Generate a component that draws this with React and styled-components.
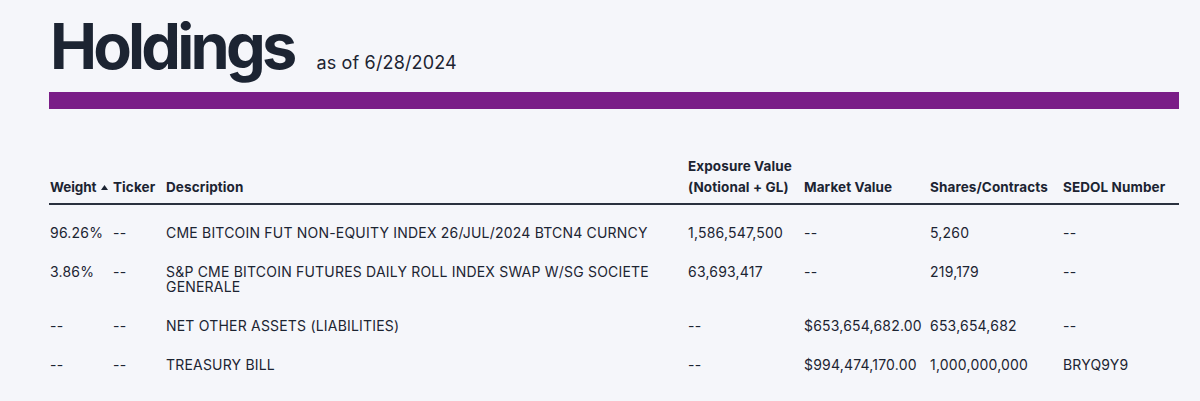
import React from "react";
import styled, { createGlobalStyle } from "styled-components";

const Global = createGlobalStyle`
  html, body { margin: 0; padding: 0; background: #f5f6fa; }
  body { font-family: Inter, "Liberation Sans", sans-serif; color: #1c2432; }
`;

const Page = styled.div`
  padding: 14px 21px 0 49px;
`;

const TitleRow = styled.div`
  display: flex;
  align-items: baseline;
  gap: 23px;
  padding-left: 1px;
`;

const Title = styled.h1`
  margin: 0;
  font-size: 63px;
  line-height: 64px;
  font-weight: 700;
  letter-spacing: -3.8px;
  color: #1c2432;
`;

const AsOf = styled.span`
  font-size: 18px;
  font-weight: 400;
  letter-spacing: 0.15px;
  color: #1c2432;
`;

const Bar = styled.div`
  margin-top: 14px;
  height: 17px;
  background: #7a1d87;
`;

const Table = styled.table`
  margin-top: 47px;
  width: 100%;
  border-collapse: collapse;
  table-layout: fixed;
`;

const Th = styled.th`
  text-align: left;
  vertical-align: bottom;
  font-size: 13.5px;
  line-height: 21px;
  letter-spacing: 0.1px;
  font-weight: 700;
  padding: 0 4px 5px 1px;
  border-bottom: 2px solid #2a313e;
  white-space: ${(p) => (p.$wrap ? "normal" : "nowrap")};
`;

const SortLabel = styled.span`
  letter-spacing: -0.1px;
`;

const Td = styled.td`
  vertical-align: top;
  font-size: 14px;
  line-height: 15px;
  letter-spacing: 0.2px;
  padding: ${(p) => (p.$first ? "20px" : "12px")} ${(p) => (p.$wide ? "36px" : "6px")} 12px 1px;
  font-weight: 400;
`;

const Arrow = styled.svg`
  display: inline-block;
  margin-left: 5px;
  vertical-align: 2px;
`;

const cols = [63, 53, 522, 116, 126, 133, 117];

const rows = [
  ["96.26%", "--", "CME BITCOIN FUT NON-EQUITY INDEX 26/JUL/2024 BTCN4 CURNCY", "1,586,547,500", "--", "5,260", "--"],
  ["3.86%", "--", "S&P CME BITCOIN FUTURES DAILY ROLL INDEX SWAP W/SG SOCIETE GENERALE", "63,693,417", "--", "219,179", "--"],
  ["--", "--", "NET OTHER ASSETS (LIABILITIES)", "--", "$653,654,682.00", "653,654,682", "--"],
  ["--", "--", "TREASURY BILL", "--", "$994,474,170.00", "1,000,000,000", "BRYQ9Y9"],
];

export default function App() {
  return (
    <>
      <Global />
      <Page>
        <TitleRow>
          <Title>Holdings</Title>
          <AsOf>as of 6/28/2024</AsOf>
        </TitleRow>
        <Bar />
        <Table>
          <colgroup>
            {cols.map((w, i) => (
              <col key={i} style={{ width: w }} />
            ))}
          </colgroup>
          <thead>
            <tr>
              <Th>
                <SortLabel>Weight</SortLabel>
                <Arrow width="7" height="5" viewBox="0 0 7 5">
                  <path d="M3.5 0 L7 5 L0 5 Z" fill="#1c2432" />
                </Arrow>
              </Th>
              <Th>Ticker</Th>
              <Th>Description</Th>
              <Th $wrap>Exposure Value (Notional + GL)</Th>
              <Th>Market Value</Th>
              <Th>Shares/Contracts</Th>
              <Th>SEDOL Number</Th>
            </tr>
          </thead>
          <tbody>
            {rows.map((r, i) => (
              <tr key={i}>
                {r.map((c, j) => (
                  <Td key={j} $first={i === 0} $wide={j === 2}>{c}</Td>
                ))}
              </tr>
            ))}
          </tbody>
        </Table>
      </Page>
    </>
  );
}
